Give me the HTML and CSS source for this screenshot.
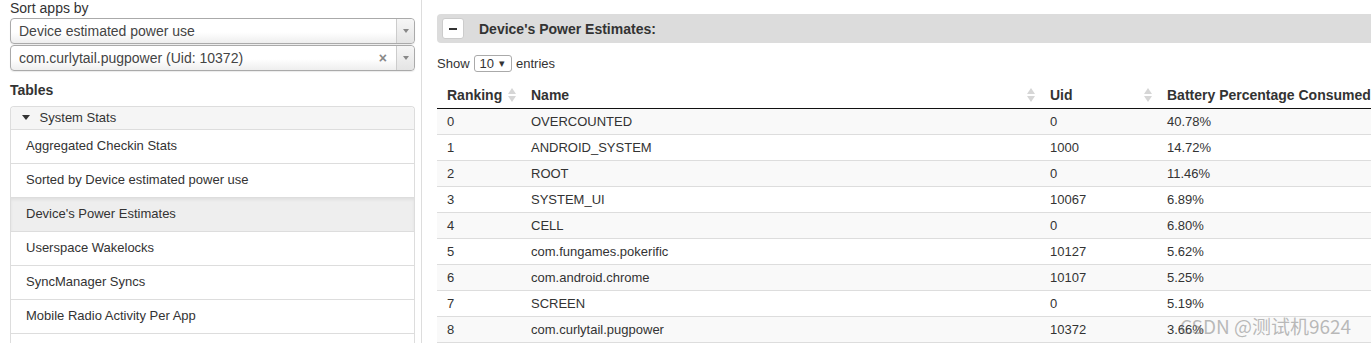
FILE: index.html
```html
<!DOCTYPE html>
<html>

<head>
    <title>Battery Historian - Device's Power Estimates</title>
    <link rel="stylesheet" href="styles.css">
</head>

<body>
    <div class="page">
        <aside class="sidebar">
            <div class="field-label">Sort apps by</div>
            <div class="picker">
                <span class="picker-text">Device estimated power use</span>
                <span class="picker-arrow"><i></i></span>
            </div>
            <div class="picker">
                <span class="picker-text">com.curlytail.pugpower (Uid: 10372)</span>
                <span class="picker-clear">&#215;</span>
                <span class="picker-arrow"><i></i></span>
            </div>

            <h3 class="side-heading">Tables</h3>
            <div class="panel">
                <div class="panel-head">
                    <svg class="caret" width="8" height="5" viewBox="0 0 8 5"><polygon points="0,0 8,0 4,5" /></svg>
                    System Stats
                </div>
                <div class="list-item">Aggregated Checkin Stats</div>
                <div class="list-item">Sorted by Device estimated power use</div>
                <div class="list-item active">Device's Power Estimates</div>
                <div class="list-item">Userspace Wakelocks</div>
                <div class="list-item">SyncManager Syncs</div>
                <div class="list-item">Mobile Radio Activity Per App</div>
                <div class="list-item empty"></div>
            </div>
        </aside>

        <main class="content">
            <div class="section-bar">
                <button class="toggle"><span></span></button>
                <span class="section-title">Device's Power Estimates:</span>
            </div>

            <div class="length-row">
                Show
                <span class="length-select">10 <i>&#9662;</i></span>
                entries
            </div>

            <table class="data">
                <thead>
                    <tr>
                        <th class="col-rank"><div class="th-in">Ranking <svg class="sort" width="8" height="14" viewBox="0 0 8 14"><polygon points="0,6 4,0 8,6" /><polygon points="0,8 8,8 4,14" /></svg></div></th>
                        <th class="col-name"><div class="th-in">Name <svg class="sort" width="8" height="14" viewBox="0 0 8 14"><polygon points="0,6 4,0 8,6" /><polygon points="0,8 8,8 4,14" /></svg></div></th>
                        <th class="col-uid"><div class="th-in">Uid <svg class="sort" width="8" height="14" viewBox="0 0 8 14"><polygon points="0,6 4,0 8,6" /><polygon points="0,8 8,8 4,14" /></svg></div></th>
                        <th class="col-pct"><div class="th-in">Battery Percentage Consumed</div></th>
                    </tr>
                </thead>
                <tbody>
                    <tr><td>0</td><td>OVERCOUNTED</td><td>0</td><td>40.78%</td></tr>
                    <tr><td>1</td><td>ANDROID_SYSTEM</td><td>1000</td><td>14.72%</td></tr>
                    <tr><td>2</td><td>ROOT</td><td>0</td><td>11.46%</td></tr>
                    <tr><td>3</td><td>SYSTEM_UI</td><td>10067</td><td>6.89%</td></tr>
                    <tr><td>4</td><td>CELL</td><td>0</td><td>6.80%</td></tr>
                    <tr><td>5</td><td>com.fungames.pokerific</td><td>10127</td><td>5.62%</td></tr>
                    <tr><td>6</td><td>com.android.chrome</td><td>10107</td><td>5.25%</td></tr>
                    <tr><td>7</td><td>SCREEN</td><td>0</td><td>5.19%</td></tr>
                    <tr><td>8</td><td>com.curlytail.pugpower</td><td>10372</td><td>3.66%</td></tr>
                </tbody>
            </table>
        </main>
    </div>

    <div class="watermark">CSDN @测试机9624</div>
</body>

</html>
```

FILE: styles.css
```css
body {
    margin: 0;
    overflow: hidden;
    font-family: "Liberation Sans", Arial, sans-serif;
    font-size: 13px;
    color: #333;
    background-color: #fff;
}

.page {
    display: flex;
    align-items: stretch;
    height: 343px;
    overflow: hidden;
}

/* left column */

.sidebar {
    flex: none;
    width: 405px;
    padding: 0 6px 0 10px;
    border-right: 1px solid #ddd;
}

.field-label {
    font-size: 14px;
    line-height: 16px;
    margin-bottom: 2px;
}

.picker {
    display: flex;
    align-items: center;
    height: 24px;
    margin-bottom: 1px;
    border: 1px solid #aaa;
    border-radius: 4px;
    background: linear-gradient(#fff 55%, #eee);
    box-shadow: 0 1px 1px rgba(0, 0, 0, 0.08);
    font-size: 14px;
    color: #444;
}

.picker-text {
    flex: 1;
    padding-left: 8px;
}

.picker-clear {
    margin-right: 9px;
    color: #888;
    font-weight: bold;
    font-size: 14px;
}

.picker-arrow {
    align-self: stretch;
    width: 17px;
    display: flex;
    align-items: center;
    justify-content: center;
    border-left: 1px solid #ccc;
    background: linear-gradient(#f6f6f6, #e4e4e4);
    border-radius: 0 4px 4px 0;
}

.picker-arrow i {
    width: 0;
    height: 0;
    border-left: 3px solid transparent;
    border-right: 3px solid transparent;
    border-top: 4px solid #888;
}

.side-heading {
    margin: 11px 0 8px;
    font-size: 14px;
    line-height: 16px;
    font-weight: bold;
}

.panel {
    border: 1px solid #ddd;
    border-bottom: none;
    border-radius: 4px 4px 0 0;
}

.panel-head {
    padding: 3px 11px;
    line-height: 16px;
    font-size: 13px;
    background-color: #f5f5f5;
    border-bottom: 1px solid #ddd;
    border-radius: 4px 4px 0 0;
}

.caret {
    fill: #333;
    margin-right: 6px;
    vertical-align: 2px;
}

.list-item {
    padding: 7px 15px 9px;
    line-height: 17px;
    border-bottom: 1px solid #ddd;
}

.list-item.empty {
    height: 17px;
}

.list-item.active {
    background-color: #eee;
    box-shadow: inset 0 2px 3px rgba(0, 0, 0, 0.06);
}

/* right column */

.content {
    flex: none;
    width: 1000px;
    padding: 14px 0 0 15px;
}

.section-bar {
    display: flex;
    align-items: center;
    height: 29px;
    background-color: #dcdcdc;
    border-radius: 4px 0 0 4px;
}

.toggle {
    display: flex;
    align-items: center;
    justify-content: center;
    width: 22px;
    height: 21px;
    margin: 0 0 0 5px;
    padding: 0;
    border: 1px solid #ccc;
    border-radius: 3px;
    background-color: #fff;
}

.toggle span {
    display: block;
    width: 8px;
    height: 2px;
    background-color: #333;
}

.section-title {
    margin-left: 15px;
    font-size: 14px;
    font-weight: bold;
}

.length-row {
    display: flex;
    align-items: center;
    height: 17px;
    margin-top: 12px;
}

.length-select {
    display: flex;
    align-items: center;
    height: 15px;
    margin: 0 4px 0 4px;
    padding: 0 6px 0 5px;
    border: 1px solid #aaa;
    border-radius: 3px;
    font-size: 13px;
}

.length-select i {
    font-style: normal;
    font-size: 11px;
    margin-left: 5px;
}

.data {
    margin-top: 8px;
    width: 1000px;
    border-collapse: collapse;
    table-layout: fixed;
}

/* widths are content widths, cells add 15px of padding */
.col-rank { width: 69px; }
.col-name { width: 504px; }
.col-uid { width: 102px; }

.data th {
    padding: 7px 5px 5px 10px;
    line-height: 16px;
    font-size: 14px;
    font-weight: bold;
    text-align: left;
    white-space: nowrap;
    border-bottom: 1px solid #111;
}

.th-in {
    display: flex;
    align-items: center;
    justify-content: space-between;
}

.sort {
    fill: #d6d6d6;
}

.data td {
    padding: 5px 10px;
    line-height: 15px;
    border-bottom: 1px solid #ddd;
}

.data tbody tr:nth-child(odd) {
    background-color: #f9f9f9;
}

.watermark {
    position: absolute;
    left: 1180px;
    top: 312px;
    font-family: "Noto Sans CJK SC", sans-serif;
    font-size: 19px;
    color: rgba(120, 120, 120, 0.5);
    white-space: nowrap;
}
```
